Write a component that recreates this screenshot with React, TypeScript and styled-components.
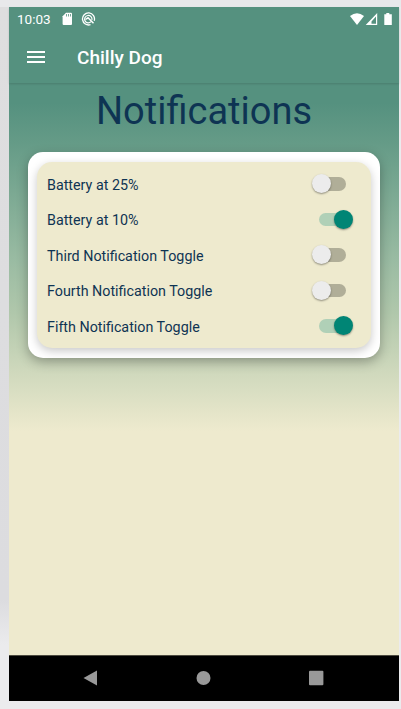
import React from 'react';
import styled, { createGlobalStyle } from 'styled-components';

const GlobalStyle = createGlobalStyle`
  * { box-sizing: border-box; }
  body { margin: 0; font-family: Roboto, sans-serif; background: #ebebed; }
`;

const Stage = styled.div`
  width: 401px;
  height: 709px;
  overflow: hidden;
  padding: 7px 2px 8px 9px;
  background:
    linear-gradient(180deg, #e8e9eb 0 7px, transparent 7px),
    linear-gradient(180deg, #dededf 0, #dcdcdf 600px, #ebebed 645px) left / 9px 100% no-repeat,
    #ebebed;
`;

const Device = styled.div`
  height: 694px;
  display: flex;
  flex-direction: column;
  background: #eeeace;
`;

const TopArea = styled.header`
  flex: 0 0 76px;
  background: #55917f;
  color: #fff;
  box-shadow: 0 1px 2px rgba(0, 0, 0, 0.14);
  z-index: 1;
`;

const StatusBar = styled.div`
  height: 24px;
  display: flex;
  align-items: center;
  padding: 0 7px 0 8px;
`;

const Clock = styled.span`
  width: 45px;
  font-size: 13.5px;
  line-height: 24px;
`;

const Glyph = styled.svg`
  display: block;
  flex: none;
`;

const Spacer = styled.div`
  flex: 1;
`;

const AppBar = styled.div`
  height: 52px;
  display: flex;
  align-items: center;
  padding-left: 18px;
`;

const AppTitle = styled.span`
  margin-left: 32px;
  padding-top: 1px;
  font-size: 19px;
  font-weight: 500;
  line-height: 24px;
`;

const Screen = styled.main`
  flex: 0 0 572px;
  padding: 0 19px;
  background: linear-gradient(180deg, #55917f 0, #55917f 20px, #659b87 60px, #9bbca3 180px, #b0c7ab 230px, #eeeace 348px);
`;

const Heading = styled.h1`
  margin: 0;
  height: 69px;
  padding-top: 4px;
  text-align: center;
  font-size: 38px;
  font-weight: 400;
  line-height: 49px;
  color: #0e3453;
`;

const Card = styled.section`
  height: 206px;
  padding: 10px 9px;
  border-radius: 15px;
  background: #fff;
  box-shadow: 0 4px 12px rgba(0, 0, 0, 0.3);
`;

const ToggleList = styled.div`
  height: 186px;
  padding: 4px 17px 0 10px;
  border-radius: 15px;
  background: #eeeace;
  box-shadow: 0 3px 10px rgba(0, 0, 0, 0.22);
`;

const ToggleRow = styled.label`
  height: 35.5px;
  display: flex;
  align-items: center;
  justify-content: space-between;
`;

const ToggleLabel = styled.span`
  padding-top: 2.4px;
  font-size: 14.3px;
  color: #0e3453;
`;

const Switch = styled.span`
  width: 42px;
  height: 20px;
  display: grid;
  align-items: center;
`;

const Track = styled.span<{ $on: boolean }>`
  grid-area: 1 / 1;
  width: 27px;
  height: 13.5px;
  margin-left: 7px;
  border-radius: 7px;
  background: ${(p) => (p.$on ? '#b0d0b7' : '#b0ae98')};
`;

const Thumb = styled.span<{ $on: boolean }>`
  grid-area: 1 / 1;
  width: 19px;
  height: 19px;
  margin-left: ${(p) => (p.$on ? '22px' : '0')};
  border-radius: 50%;
  background: ${(p) => (p.$on ? '#008575' : '#ececec')};
  box-shadow: 0 1px 2px rgba(0, 0, 0, 0.4);
`;

const NavBar = styled.nav`
  flex: 0 0 46px;
  border-top: 1px solid #4d4b40;
  background: #000;
  display: flex;
  align-items: center;
  padding: 0 75px 1px 73px;
  justify-content: space-between;
`;

const toggles = [
  { label: 'Battery at 25%', on: false },
  { label: 'Battery at 10%', on: true },
  { label: 'Third Notification Toggle', on: false },
  { label: 'Fourth Notification Toggle', on: false },
  { label: 'Fifth Notification Toggle', on: true },
];

function Toggle({ on }: { on: boolean }) {
  return (
    <Switch role="switch" aria-checked={on}>
      <Track $on={on} />
      <Thumb $on={on} />
    </Switch>
  );
}

export default function App() {
  return (
    <>
      <GlobalStyle />
      <Stage>
        <Device>
          <TopArea>
            <StatusBar>
              <Clock>10:03</Clock>
              <Glyph width="34" height="14" viewBox="0 0 34 14" fill="none">
                <path d="M4 .8h5q1 0 1 1V12q0 1-1 1H1.600q-1 0-1-1V4.200z" fill="#fff" />
                <path d="M4.500 2v2.500M6.500 2v2.500M8.500 2v2.500" stroke="#55917f" strokeWidth=".8" />
                <path d="M28.500 12.600A6 6 0 1 1 32.200 8.800" stroke="#fff" strokeWidth="1.300" />
                <path d="M29 9.700A3.700 3.700 0 1 1 29.900 8" stroke="#fff" strokeWidth="1.200" />
                <path d="M23.500 7.500l2.500-1.700 5.500 5.400" stroke="#fff" strokeWidth="1.500" />
              </Glyph>
              <Spacer />
              <Glyph width="43" height="14" viewBox="0 0 43 14" fill="none">
                <path d="M1 4Q8-1.500 15 4L8 13z" fill="#fff" />
                <path fillRule="evenodd" d="M28.200 1v12H16.700zM27 4.500l-4.500 5v2.300h4.500z" fill="#fff" />
                <path d="M37.300 1h3v1.300h2.500V13h-7.500V2.300h2z" fill="#fff" />
              </Glyph>
            </StatusBar>
            <AppBar>
              <Glyph width="18" height="12" viewBox="0 0 18 12">
                <path d="M0 1h18M0 6h18M0 11h18" stroke="#fff" strokeWidth="2" />
              </Glyph>
              <AppTitle>Chilly Dog</AppTitle>
            </AppBar>
          </TopArea>
          <Screen>
            <Heading>Notifications</Heading>
            <Card>
              <ToggleList>
                {toggles.map((t) => (
                  <ToggleRow key={t.label}>
                    <ToggleLabel>{t.label}</ToggleLabel>
                    <Toggle on={t.on} />
                  </ToggleRow>
                ))}
              </ToggleList>
            </Card>
          </Screen>
          <NavBar>
            <Glyph width="16" height="16" viewBox="0 0 16 16">
              <path d="M1.500 8L15 .5v15z" fill="#999" />
            </Glyph>
            <Glyph width="16" height="16" viewBox="0 0 16 16">
              <circle cx="8.500" cy="8" r="7" fill="#999" />
            </Glyph>
            <Glyph width="16" height="16" viewBox="0 0 16 16">
              <rect x="1" y=".8" width="14.400" height="14.400" rx="1" fill="#999" />
            </Glyph>
          </NavBar>
        </Device>
      </Stage>
    </>
  );
}
